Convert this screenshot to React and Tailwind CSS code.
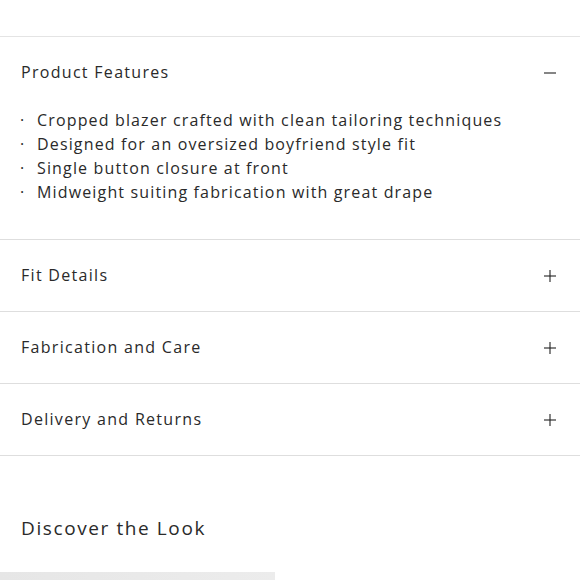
import React, { useState } from 'react';

const sections = [
  {
    title: 'Product Features',
    items: [
      'Cropped blazer crafted with clean tailoring techniques',
      'Designed for an oversized boyfriend style fit',
      'Single button closure at front',
      'Midweight suiting fabrication with great drape',
    ],
  },
  { title: 'Fit Details', items: ['Model wears a size 8'] },
  { title: 'Fabrication and Care', items: ['Dry clean only'] },
  { title: 'Delivery and Returns', items: ['Free returns within 30 days'] },
];

function Icon({ open }) {
  return (
    <svg width="14" height="14" viewBox="0 0 14 14" className="text-[#222]">
      <path d="M1 7h12" stroke="currentColor" strokeWidth="1.1" />
      {!open && <path d="M7 1v12" stroke="currentColor" strokeWidth="1.1" />}
    </svg>
  );
}

export default function App() {
  const [open, setOpen] = useState(0);

  return (
    <div
      className="w-full min-h-[580px] bg-white text-[#2a2a2a] overflow-hidden"
      style={{ fontFamily: "'Open Sans', 'Liberation Sans', sans-serif" }}
    >
      <div className="h-[36px]" />

      {/* Accordion */}
      <div className="border-t border-[#e4e4e4]">
        {sections.map((s, i) => (
          <div key={s.title} className="border-b border-[#dedede]">
            <button
              onClick={() => setOpen(open === i ? -1 : i)}
              className="w-full h-[71px] pl-[21px] pr-[23px] flex items-center justify-between text-left cursor-pointer"
            >
              <span className="text-[16px] leading-[24px] tracking-[1.3px] -mt-[2px]">{s.title}</span>
              <Icon open={open === i} />
            </button>
            {open === i && (
              <ul className="pl-[20px] pb-[35px] text-[16px] leading-[24px] tracking-[1.15px]">
                {s.items.map((item) => (
                  <li key={item} className="flex">
                    <span className="w-[17px]">·</span>
                    <span>{item}</span>
                  </li>
                ))}
              </ul>
            )}
          </div>
        ))}
      </div>

      {/* Discover the Look */}
      <div className="pt-[57px] pl-[21px]">
        <h2 className="text-[19px] leading-[30px] tracking-[1.6px]">Discover the Look</h2>
      </div>
      <div className="mt-[29px] w-[275px] h-[40px] bg-gradient-to-r from-[#e6e6e6] to-[#ececec]" />
    </div>
  );
}
